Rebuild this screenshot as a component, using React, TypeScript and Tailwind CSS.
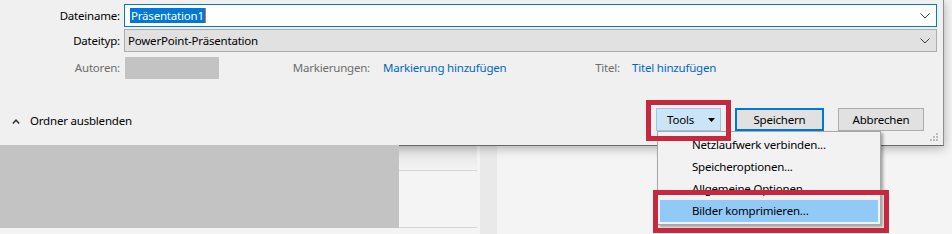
import React from 'react';

const Chevron: React.FC = () => (
  <svg width="10" height="6" viewBox="0 0 10 6" className="text-[#3c3c3c]">
    <path d="M0.5 0.5 L5 5 L9.5 0.5" fill="none" stroke="currentColor" strokeWidth="1" />
  </svg>
);

const Grip: React.FC = () => (
  <svg width="8" height="8" viewBox="0 0 8 8">
    <rect x="6" y="0" width="2" height="2" fill="#bcbcbc" />
    <rect x="3" y="3" width="2" height="2" fill="#bcbcbc" />
    <rect x="6" y="3" width="2" height="2" fill="#bcbcbc" />
    <rect x="0" y="6" width="2" height="2" fill="#bcbcbc" />
    <rect x="3" y="6" width="2" height="2" fill="#bcbcbc" />
    <rect x="6" y="6" width="2" height="2" fill="#bcbcbc" />
  </svg>
);

const menuItems = ['Netzlaufwerk verbinden...', 'Speicheroptionen...', 'Allgemeine Optionen', 'Bilder komprimieren...'];

const App: React.FC = () => {
  return (
    <div className="relative w-[952px] h-[234px] overflow-hidden bg-[#f4f4f4] text-[11.5px] tracking-[-0.2px] text-black font-['Noto_Sans',sans-serif] leading-none">
      {/* save dialog */}
      <div className="relative z-10 w-[944px] h-[146px] bg-[#f0f0f0] border-r border-b border-r-[#8e8e8e] border-b-[#6a6a6a] shadow-[0_2px_10px_rgba(0,0,0,0.3)] pt-[4px] pr-[6px]">
        <div className="grid grid-cols-[120px_1fr] gap-x-[4px] gap-y-[2px]">
          <div className="h-[23px] flex items-center justify-end pt-px">Dateiname:</div>
          <div className="h-[23px] flex items-center bg-white border border-[#0078d7] pl-[5px] pr-[6px]">
            <span className="bg-[#0078d7] text-white px-px py-[2px]">Präsentation1</span>
            <span className="w-px h-[15px] bg-[#e8702a]" />
            <span className="flex-1" />
            <Chevron />
          </div>
          <div className="h-[23px] flex items-center justify-end pt-px">Dateityp:</div>
          <div className="h-[23px] flex items-center bg-[#e1e1e1] border border-[#adadad] pl-[3px] pr-[6px] pt-px">
            <span className="flex-1">PowerPoint-Präsentation</span>
            <Chevron />
          </div>
        </div>

        <div className="mt-[5px] flex items-center h-[22px]">
          <span className="w-[120px] text-right text-[#6d6d6d]">Autoren:</span>
          <span className="ml-[5px] w-[94px] h-[22px] bg-[#c3c3c3]" />
          <span className="w-[151px] text-right text-[#6d6d6d]">Markierungen:</span>
          <span className="ml-[13px] w-[200px] text-[#0066cc]">Markierung hinzufügen</span>
          <span className="w-[37px] text-right text-[#6d6d6d]">Titel:</span>
          <span className="ml-[12px] text-[#0066cc]">Titel hinzufügen</span>
        </div>

        <div className="mt-[29px] flex items-center h-[23px]">
          <div className="flex items-center pl-[12px] pt-[3px]">
            <svg width="8" height="5" viewBox="0 0 8 5">
              <path d="M0.8 4.5 L4 1.2 L7.2 4.5" fill="none" stroke="#333" strokeWidth="1.5" />
            </svg>
            <span className="ml-[10px]">Ordner ausblenden</span>
          </div>
          <div className="flex-1" />
          <div className="w-[65px] h-[23px] flex items-center bg-[#cce4f7] border border-[#99c9ef] pl-[10px] pr-[5px]">
            <span className="flex-1">Tools</span>
            <svg width="7" height="4" viewBox="0 0 7 4">
              <path d="M0 0 L7 0 L3.5 4 Z" fill="#000" />
            </svg>
          </div>
          <div className="ml-[14px] w-[89px] h-[23px] flex items-center justify-center bg-[#e1e1e1] border-2 border-[#0078d7]">Speichern</div>
          <div className="ml-[14px] w-[86px] h-[23px] flex items-center justify-center bg-[#e1e1e1] border border-[#adadad]">Abbrechen</div>
          <div className="w-[13px]" />
        </div>

        <div className="absolute right-[5px] bottom-[4px]">
          <Grip />
        </div>
      </div>

      {/* file list behind the dialog */}
      <div className="flex h-[88px]">
        <div className="w-[477px] flex flex-col">
          <div className="h-[25px] border-b border-[#d5d5d5] bg-gradient-to-b from-[#e2e2e2] to-[#f4f4f4]" />
          <div className="h-[57px] border-b border-[#d5d5d5]" />
        </div>
        <div className="ml-[3px] w-[17px] bg-[#e9e9e9]" />
        <div className="flex-1" />
      </div>

      {/* redaction block */}
      <div className="absolute z-20 left-0 top-[145px] w-[399px] h-[83px] bg-[#c3c3c3]" />

      {/* tools menu */}
      <div className="absolute z-30 left-[657px] top-[131px] w-[224px] h-[94px] bg-[#f2f2f2] border border-[#a8a8a8] p-[2px] shadow-[2px_2px_3px_rgba(0,0,0,0.35)]">
        {menuItems.map((item, i) => (
          <div
            key={item}
            className={`h-[22px] flex items-center pl-[32px] ${i === 3 ? 'bg-[#91c9f7]' : ''}`}
          >
            {item}
          </div>
        ))}
      </div>

      {/* red highlight frames */}
      <div className="absolute z-40 left-[646px] top-[100px] w-[85px] h-[41px] border-[5px] border-[#c6283f]" />
      <div className="absolute z-40 left-[653px] top-[190px] w-[236px] h-[43px] border-[5px] border-[#c6283f]" />
    </div>
  );
};

export default App;
